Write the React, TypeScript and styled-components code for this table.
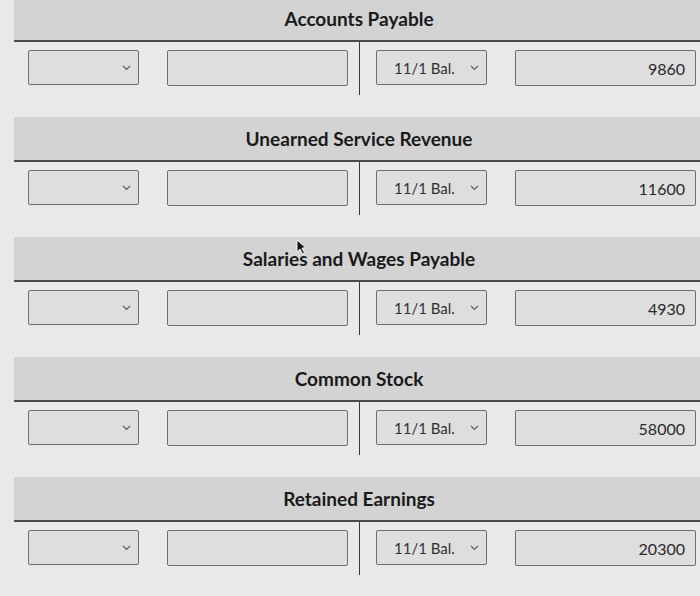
import React from "react";
import styled, { createGlobalStyle } from "styled-components";

const GlobalStyle = createGlobalStyle`
	html, body {
		margin: 0;
		padding: 0;
		background: #e9e9e9;
		overflow: hidden;
	}
	body {
		font-family: Lato, "Open Sans", Arial, sans-serif;
		color: #222;
	}
`;

const Page = styled.div`
	position: relative;
	width: 700px;
	margin-top: -3px;
`;

const Section = styled.section`
	margin-bottom: 22px;
`;

const Band = styled.div`
	margin-left: 14px;
	height: 43px;
	background: #d3d3d3;
	border-bottom: 2px solid #4c4c4c;
	display: flex;
	align-items: center;
	justify-content: center;
`;

const Title = styled.h3`
	margin: 0 0 0 4px;
	font-size: 19px;
	font-weight: 700;
	color: #1a1a1a;
`;

const Row = styled.div`
	margin-left: 14px;
	display: grid;
	grid-template-columns: 346px 1fr;
	height: 53px;
`;

const Side = styled.div<{ $left?: boolean }>`
	display: flex;
	align-items: flex-start;
	gap: 28px;
	padding: 8px 0 0 ${({ $left }) => ($left ? "14px" : "16px")};
	border-right: ${({ $left }) => ($left ? "1.5px solid #3a3a3a" : "none")};
`;

const Select = styled.div`
	box-sizing: border-box;
	width: 111px;
	height: 35px;
	background: #dedede;
	border: 1px solid #6e6e6e;
	border-radius: 2px;
	display: flex;
	align-items: center;
	justify-content: space-between;
	padding: 0 7px 0 17px;
	font-size: 15px;
	color: #333;
`;

const Field = styled.div`
	box-sizing: border-box;
	width: 181px;
	height: 36px;
	background: #dedede;
	border: 1px solid #6e6e6e;
	border-radius: 2px;
	display: flex;
	align-items: center;
	justify-content: flex-end;
	padding-right: 10px;
	font-size: 16px;
	color: #2a2a2a;
`;

const Cursor = styled.svg`
	position: absolute;
	left: 296px;
	top: 242px;
`;

const Chevron = () => (
	<svg width="9" height="6" viewBox="0 0 9 6">
		<polyline points="1,1 4.5,4.5 8,1" fill="none" stroke="#5e5e5e" strokeWidth="1.2" />
	</svg>
);

const accounts = [
	{ name: "Accounts Payable", balance: "9860" },
	{ name: "Unearned Service Revenue", balance: "11600" },
	{ name: "Salaries and Wages Payable", balance: "4930" },
	{ name: "Common Stock", balance: "58000" },
	{ name: "Retained Earnings", balance: "20300" }
];

const App = () => (
	<>
		<GlobalStyle />
		<Page>
			{accounts.map((acc) => (
				<Section key={acc.name}>
					<Band>
						<Title>{acc.name}</Title>
					</Band>
					<Row>
						<Side $left>
							<Select>
								<span />
								<Chevron />
							</Select>
							<Field />
						</Side>
						<Side>
							<Select>
								<span>11/1 Bal.</span>
								<Chevron />
							</Select>
							<Field>{acc.balance}</Field>
						</Side>
					</Row>
				</Section>
			))}
			<Cursor width="11" height="16" viewBox="0 0 11 16">
				<path d="M1 1 L1 13 L4 10 L6.5 15 L8.5 14 L6 9 L10 9 Z" fill="#111" stroke="#f5f5f5" strokeWidth="1" />
			</Cursor>
		</Page>
	</>
);

export default App;
